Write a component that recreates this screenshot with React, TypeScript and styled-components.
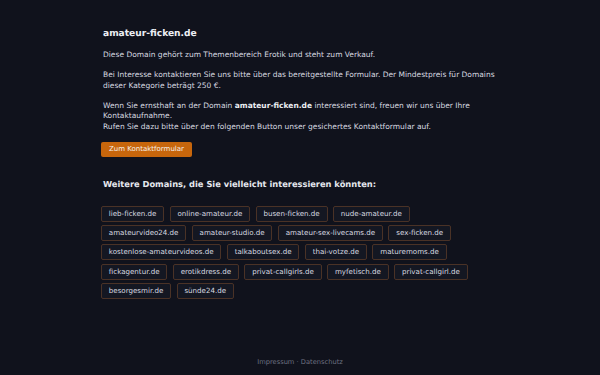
import React from "react";
import styled, { createGlobalStyle } from "styled-components";

const Global = createGlobalStyle`
  html, body { margin: 0; padding: 0; background: #10121c; }
  body {
    font-family: "DejaVu Sans", "Liberation Sans", sans-serif;
    color: #e2e4ea;
    text-rendering: geometricPrecision;
  }
  * { box-sizing: border-box; }
`;

const Page = styled.div`
  min-height: 375px;
  display: flex;
  flex-direction: column;
  background: #10121c;
`;

const Main = styled.main`
  flex: 1;
  width: 406px;
  margin: 0 auto;
  padding: 29px 0 0 6px;
`;

const Title = styled.h1`
  font-size: 9.1px;
  font-weight: bold;
  margin: 0 0 11px;
  color: #eceef3;
`;

const P = styled.p`
  font-size: 7.5px;
  line-height: 10.5px;
  margin: 0 0 9.5px;
  color: #d8dae0;
`;

const Strong = styled.b`
  font-weight: bold;
  color: #eceef3;
`;

const Button = styled.a`
  display: block;
  width: fit-content;
  margin: 3px 0 0 -2px;
  background: #c7660c;
  color: #f5f0ea;
  font-size: 7px;
  line-height: 15px;
  padding: 0 8px;
  border-radius: 2px;
  text-decoration: none;
`;

const SubTitle = styled.h2`
  font-size: 8.3px;
  font-weight: bold;
  margin: 22px 0 17px;
  color: #e6e8ee;
`;

const Tags = styled.div`
  display: flex;
  flex-wrap: wrap;
  gap: 3.4px 5.5px;
  margin-left: -2px;
  max-width: 390px;
`;

const Tag = styled.a`
  display: inline-block;
  font-size: 7.1px;
  line-height: 14px;
  padding: 0 6.8px;
  border: 1px solid #4a3226;
  border-radius: 2px;
  background: #141722;
  color: #d8dae0;
  text-decoration: none;
`;

const Footer = styled.footer`
  text-align: center;
  font-size: 6.7px;
  color: #6d7180;
  padding-bottom: 9px;
`;

const domains = [
  "lieb-ficken.de",
  "online-amateur.de",
  "busen-ficken.de",
  "nude-amateur.de",
  "amateurvideo24.de",
  "amateur-studio.de",
  "amateur-sex-livecams.de",
  "sex-ficken.de",
  "kostenlose-amateurvideos.de",
  "talkaboutsex.de",
  "thai-votze.de",
  "maturemoms.de",
  "fickagentur.de",
  "erotikdress.de",
  "privat-callgirls.de",
  "myfetisch.de",
  "privat-callgirl.de",
  "besorgesmir.de",
  "sünde24.de",
];

export default function App() {
  return (
    <Page>
      <Global />
      <Main>
        <Title>amateur-ficken.de</Title>
        <P>Diese Domain gehört zum Themenbereich Erotik und steht zum Verkauf.</P>
        <P>
          Bei Interesse kontaktieren Sie uns bitte über das bereitgestellte Formular. Der Mindestpreis für Domains
          dieser Kategorie beträgt 250 €.
        </P>
        <P>
          Wenn Sie ernsthaft an der Domain <Strong>amateur-ficken.de</Strong> interessiert sind, freuen wir uns über Ihre
          Kontaktaufnahme.
          <br />
          Rufen Sie dazu bitte über den folgenden Button unser gesichertes Kontaktformular auf.
        </P>
        <Button href="#">Zum Kontaktformular</Button>
        <SubTitle>Weitere Domains, die Sie vielleicht interessieren könnten:</SubTitle>
        <Tags>
          {domains.map((d) => (
            <Tag key={d} href="#">{d}</Tag>
          ))}
        </Tags>
      </Main>
      <Footer>Impressum · Datenschutz</Footer>
    </Page>
  );
}
